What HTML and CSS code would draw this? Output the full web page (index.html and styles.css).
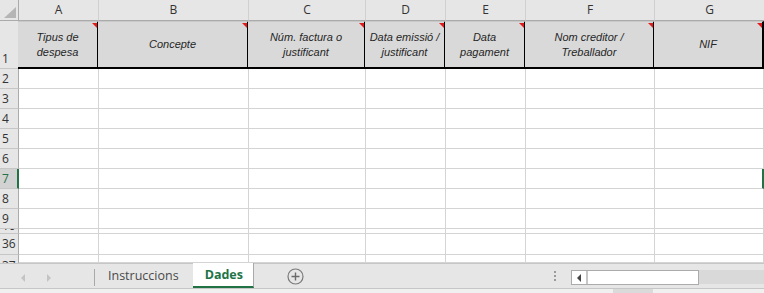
FILE: index.html
```
<!DOCTYPE html>
<html lang="ca">

<head>
    <meta charset="UTF-8">
    <meta name="viewport" content="width=device-width, initial-scale=1.0">
    <title>Dades</title>
    <link rel="stylesheet" href="styles.css">
</head>

<body>
    <div class="sheet">
        <!-- fila de lletres -->
        <div class="corner"><span class="corner-tri"></span></div>
        <div class="col-head">A</div>
        <div class="col-head">B</div>
        <div class="col-head">C</div>
        <div class="col-head">D</div>
        <div class="col-head">E</div>
        <div class="col-head">F</div>
        <div class="col-head last">G</div>

        <!-- fila 1: capçaleres -->
        <div class="row-head tall">1</div>
        <div class="title">Tipus de<br>despesa</div>
        <div class="title">Concepte</div>
        <div class="title">Núm. factura o<br>justificant</div>
        <div class="title">Data emissió /<br>justificant</div>
        <div class="title">Data<br>pagament</div>
        <div class="title">Nom creditor /<br>Treballador</div>
        <div class="title">NIF</div>

        <div class="row-head">2</div>
        <div class="cell"></div><div class="cell"></div><div class="cell"></div><div class="cell"></div><div class="cell"></div><div class="cell"></div><div class="cell"></div>
        <div class="row-head">3</div>
        <div class="cell"></div><div class="cell"></div><div class="cell"></div><div class="cell"></div><div class="cell"></div><div class="cell"></div><div class="cell"></div>
        <div class="row-head">4</div>
        <div class="cell"></div><div class="cell"></div><div class="cell"></div><div class="cell"></div><div class="cell"></div><div class="cell"></div><div class="cell"></div>
        <div class="row-head">5</div>
        <div class="cell"></div><div class="cell"></div><div class="cell"></div><div class="cell"></div><div class="cell"></div><div class="cell"></div><div class="cell"></div>
        <div class="row-head">6</div>
        <div class="cell"></div><div class="cell"></div><div class="cell"></div><div class="cell"></div><div class="cell"></div><div class="cell"></div><div class="cell"></div>
        <div class="row-head selected">7</div>
        <div class="cell"></div><div class="cell"></div><div class="cell"></div><div class="cell"></div><div class="cell"></div><div class="cell"></div><div class="cell sel-edge"></div>
        <div class="row-head">8</div>
        <div class="cell"></div><div class="cell"></div><div class="cell"></div><div class="cell"></div><div class="cell"></div><div class="cell"></div><div class="cell"></div>
        <div class="row-head">9</div>
        <div class="cell"></div><div class="cell"></div><div class="cell"></div><div class="cell"></div><div class="cell"></div><div class="cell"></div><div class="cell"></div>
        <div class="row-head cut-top">10</div>
        <div class="cell"></div><div class="cell"></div><div class="cell"></div><div class="cell"></div><div class="cell"></div><div class="cell"></div><div class="cell"></div>
        <div class="row-head">36</div>
        <div class="cell"></div><div class="cell"></div><div class="cell"></div><div class="cell"></div><div class="cell"></div><div class="cell"></div><div class="cell"></div>
        <div class="row-head cut-bottom">37</div>
        <div class="cell"></div><div class="cell"></div><div class="cell"></div><div class="cell"></div><div class="cell"></div><div class="cell"></div><div class="cell"></div>
    </div>

    <div class="tabbar">
        <div class="nav">
            <span class="arrow left"></span>
            <span class="arrow right"></span>
        </div>
        <div class="tab">Instruccions</div>
        <div class="tab active">Dades</div>
        <div class="add">
            <svg width="17" height="17" viewBox="0 0 17 17">
                <circle cx="8.5" cy="8.5" r="7.5" fill="none" stroke="#7a7a7a" stroke-width="1.2"/>
                <path d="M8.5 4.5v8M4.5 8.5h8" stroke="#6a6a6a" stroke-width="1.4"/>
            </svg>
        </div>
        <div class="dots"><i></i><i></i><i></i></div>
        <div class="hscroll">
            <div class="hbtn"><span class="tri"></span></div>
            <div class="thumb"></div>
        </div>
        <div class="track"></div>
    </div>
    <div class="strip"><span class="strip-thumb"></span></div>
</body>

</html>
```

FILE: styles.css
```
body {
    margin: 0;
    width: 764px;
    height: 293px;
    overflow: hidden;
    background: #fff;
    font-family: "Open Sans", "Noto Sans", sans-serif;
}

.sheet {
    display: grid;
    grid-template-columns: 19px 80px 150px 117px 80px 80px 129px 109px;
    grid-template-rows: 21px 48px repeat(8, 20px) 5px 21px 8px;
    overflow: hidden;
}

.sheet > div {
    box-sizing: border-box;
    overflow: hidden;
}

.corner {
    background: #e6e6e6;
    border-right: 1px solid #ababab;
    border-bottom: 1px solid #ababab;
    position: relative;
}

.corner-tri {
    position: absolute;
    right: 2px;
    bottom: 2px;
    width: 0;
    height: 0;
    border-left: 12px solid transparent;
    border-bottom: 11px solid #b5b5b5;
}

.col-head {
    background: #e6e6e6;
    border-right: 1px solid #d0d0d0;
    border-bottom: 1px solid #ababab;
    text-align: center;
    font-size: 12px;
    line-height: 20px;
    color: #333;
}

.col-head.last {
    border-right: 0;
}

.row-head {
    background: #e6e6e6;
    border-right: 1px solid #ababab;
    border-bottom: 1px solid #c6c6c6;
    font-size: 12px;
    color: #333;
    padding-left: 2px;
    line-height: 19px;
}

.row-head.tall {
    display: flex;
    align-items: flex-end;
    padding-bottom: 1px;
    line-height: 17px;
}

.row-head.selected {
    background: #d2d2d2;
    color: #217346;
    border-right: 2px solid #217346;
}

.row-head.cut-top {
    display: flex;
    align-items: flex-end;
    line-height: 14px;
}

.row-head.cut-bottom {
    border-bottom: 0;
    line-height: 22px;
}

.title {
    position: relative;
    background: #d9d9d9;
    border-top: 1px solid #c8c8c8;
    border-right: 2px solid #000;
    border-bottom: 2px solid #000;
    margin-left: -1px;
    display: flex;
    align-items: center;
    justify-content: center;
    text-align: center;
    font-family: "Liberation Sans", Arial, sans-serif;
    font-style: italic;
    font-size: 11px;
    line-height: 15px;
    color: #262626;
}

.title::after {
    content: "";
    position: absolute;
    top: 1px;
    right: 0;
    border-left: 5px solid transparent;
    border-top: 5px solid #e01b1b;
}

.cell {
    border-right: 1px solid #d4d4d4;
    border-bottom: 1px solid #d4d4d4;
}

.cell.sel-edge {
    border-right: 2px solid #217346;
}

.tabbar {
    display: flex;
    align-items: stretch;
    height: 24px;
    background: #e6e6e6;
    border-top: 1px solid #c6c6c6;
}

.nav {
    width: 95px;
    display: flex;
    align-items: center;
    gap: 22px;
    padding-left: 21px;
    box-sizing: border-box;
    border-right: 1px solid #a9a9a9;
    margin: 5px 0 2px;
}

.arrow {
    width: 0;
    height: 0;
    border-top: 4px solid transparent;
    border-bottom: 4px solid transparent;
}

.arrow.left {
    border-right: 4px solid #c4c4c4;
}

.arrow.right {
    border-left: 4px solid #c4c4c4;
}

.tab {
    font-size: 12.5px;
    color: #4a4a4a;
    padding: 0 14px 0 13px;
    line-height: 24px;
}

.tab.active {
    background: #fff;
    color: #217346;
    font-weight: bold;
    padding: 0 10px 0 12px;
    border-right: 1px solid #a9a9a9;
    border-bottom: 2px solid #217346;
    margin-top: -1px;
    line-height: 24px;
}

.add {
    width: 85px;
    display: flex;
    align-items: center;
    padding-left: 33px;
    box-sizing: border-box;
}

.dots {
    flex: 1;
    display: flex;
    flex-direction: column;
    align-items: flex-end;
    justify-content: center;
    gap: 2px;
    padding-right: 15px;
    box-sizing: border-box;
}

.dots i {
    display: block;
    width: 2px;
    height: 2px;
    background: #9a9a9a;
}

.hscroll {
    display: flex;
    width: 128px;
    height: 15px;
    margin-top: 6px;
    box-sizing: border-box;
    border: 1px solid #ababab;
    background: #fff;
}

.hbtn {
    width: 14px;
    border-right: 2px solid #c6c6c6;
    display: flex;
    align-items: center;
    justify-content: center;
}

.tri {
    width: 0;
    height: 0;
    border-top: 4px solid transparent;
    border-bottom: 4px solid transparent;
    border-right: 4px solid #444;
}

.thumb {
    flex: 1;
}

.track {
    width: 65px;
    height: 14px;
    margin-top: 6px;
    background: #d9d9d9;
}

.strip {
    height: 5px;
    background: #f0f0f0;
    border-top: 1px solid #c6c6c6;
    position: relative;
}

.strip-thumb {
    position: absolute;
    left: 613px;
    top: 0;
    width: 40px;
    height: 4px;
    background: #dadada;
}
```
